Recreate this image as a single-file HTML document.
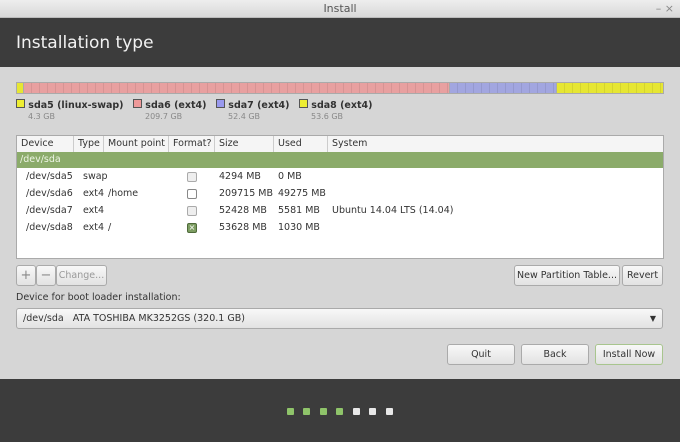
<!DOCTYPE html>
<html><head><style>
*{box-sizing:border-box;margin:0;padding:0}
body{width:680px;height:442px;overflow:hidden;background:#d6d6d6;font-family:"DejaVu Sans","Liberation Sans",sans-serif;font-size:9.5px;color:#333;position:relative}
.a{position:absolute}
.title{left:0;top:0;width:680px;height:18px;background:linear-gradient(#eee,#d8d8d8);border-bottom:1px solid #bbb;text-align:center;line-height:18px;font-size:11px;color:#555}
.hdr{left:0;top:18px;width:680px;height:49px;background:#3c3c3c;color:#f2f2f2;font-size:17px;padding:15px 0 0 16px}
.bar{top:82px;height:12px;border:1px solid #aaa;background-image:repeating-linear-gradient(90deg,transparent 0 7px,rgba(0,0,0,.08) 7px 8px)}
.sw{width:9px;height:9px;border:1px solid #555;display:inline-block}
.lg{top:99px;font-weight:bold;font-size:9.5px}
.sub{font-size:8px;color:#888;font-weight:normal;margin-left:12px}
.tbl{left:16px;top:135px;width:648px;height:124px;background:#fff;border:1px solid #aaa}
.th{position:absolute;top:0;height:16px;line-height:16px;border-right:1px solid #ccc;padding-left:4px;background:#f5f5f5}
.row{position:absolute;left:0;width:646px;height:16px;line-height:16px}
.c{position:absolute}
.cb{position:absolute;left:170px;top:3px;width:10px;height:10px;border:1px solid #aaa;border-radius:2px;background:#eee}
.btn{position:absolute;height:21px;border:1px solid #aaa;border-radius:3px;background:linear-gradient(#f8f8f8,#e2e2e2);text-align:center;line-height:19px;color:#333}
.dot{position:absolute;top:408px;width:7px;height:7px;border-radius:1px}
</style></head><body>
<div class="a title">Install<span style="position:absolute;right:6px;color:#888">– ×</span></div>
<div class="a hdr">Installation type</div>
<div class="a bar" style="left:16px;width:8px;background-color:#e6e633"></div>
<div class="a bar" style="left:23px;width:427px;background-color:#e8a0a0"></div>
<div class="a bar" style="left:449px;width:108px;background-color:#a2a6e0"></div>
<div class="a bar" style="left:556px;width:108px;background-color:#e6e633"></div>
<div class="a lg" style="left:16px"><span class="sw" style="background:#eeee33"></span> sda5 (linux-swap)<br><span class="sub">4.3 GB</span></div>
<div class="a lg" style="left:133px"><span class="sw" style="background:#ee9999"></span> sda6 (ext4)<br><span class="sub">209.7 GB</span></div>
<div class="a lg" style="left:216px"><span class="sw" style="background:#9999ee"></span> sda7 (ext4)<br><span class="sub">52.4 GB</span></div>
<div class="a lg" style="left:299px"><span class="sw" style="background:#eeee33"></span> sda8 (ext4)<br><span class="sub">53.6 GB</span></div>
<div class="a tbl">
<div class="th" style="left:0;width:57px">Device</div>
<div class="th" style="left:57px;width:30px">Type</div>
<div class="th" style="left:87px;width:65px">Mount point</div>
<div class="th" style="left:152px;width:46px">Format?</div>
<div class="th" style="left:198px;width:59px">Size</div>
<div class="th" style="left:257px;width:54px">Used</div>
<div class="th" style="left:311px;width:335px;border-right:0">System</div>
<div class="row" style="top:16px;background:#8bab6a;color:#eef5e6;padding-left:3px">/dev/sda</div>
<div class="row" style="top:33px"><span class="c" style="left:9px">/dev/sda5</span><span class="c" style="left:66px">swap</span><span class="cb"></span><span class="c" style="left:202px">4294 MB</span><span class="c" style="left:261px">0 MB</span></div>
<div class="row" style="top:50px"><span class="c" style="left:9px">/dev/sda6</span><span class="c" style="left:66px">ext4</span><span class="c" style="left:91px">/home</span><span class="cb" style="background:#fff;border-color:#888"></span><span class="c" style="left:202px">209715 MB</span><span class="c" style="left:261px">49275 MB</span></div>
<div class="row" style="top:67px"><span class="c" style="left:9px">/dev/sda7</span><span class="c" style="left:66px">ext4</span><span class="cb"></span><span class="c" style="left:202px">52428 MB</span><span class="c" style="left:261px">5581 MB</span><span class="c" style="left:315px">Ubuntu 14.04 LTS (14.04)</span></div>
<div class="row" style="top:84px"><span class="c" style="left:9px">/dev/sda8</span><span class="c" style="left:66px">ext4</span><span class="c" style="left:91px">/</span><span class="cb" style="background:#7d9d62;border-color:#4e6a3a;color:#fff;font-size:8px;line-height:8px;text-align:center">×</span><span class="c" style="left:202px">53628 MB</span><span class="c" style="left:261px">1030 MB</span></div>
</div>
<div class="btn" style="left:16px;top:265px;width:20px;color:#888;font-size:13px">+</div>
<div class="btn" style="left:36px;top:265px;width:20px;color:#888;font-size:13px">−</div>
<div class="btn" style="left:56px;top:265px;width:51px;color:#999">Change...</div>
<div class="btn" style="left:514px;top:265px;width:106px">New Partition Table...</div>
<div class="btn" style="left:622px;top:265px;width:41px">Revert</div>
<div class="a" style="left:16px;top:292px">Device for boot loader installation:</div>
<div class="btn" style="left:16px;top:308px;width:647px;text-align:left;padding-left:6px">/dev/sda&nbsp;&nbsp;&nbsp;ATA TOSHIBA MK3252GS (320.1 GB)<span style="position:absolute;right:6px;font-size:8px">▼</span></div>
<div class="btn" style="left:447px;top:344px;width:68px">Quit</div>
<div class="btn" style="left:521px;top:344px;width:68px">Back</div>
<div class="btn" style="left:595px;top:344px;width:68px;border-color:#a8c58e">Install Now</div>
<div class="a" style="left:0;top:379px;width:680px;height:63px;background:#3c3c3c"></div>
<div class="dot" style="left:287px;background:#8fc46a"></div>
<div class="dot" style="left:303px;background:#8fc46a"></div>
<div class="dot" style="left:320px;background:#8fc46a"></div>
<div class="dot" style="left:336px;background:#8fc46a"></div>
<div class="dot" style="left:353px;background:#e8e8e8"></div>
<div class="dot" style="left:369px;background:#e8e8e8"></div>
<div class="dot" style="left:386px;background:#e8e8e8"></div>
</body></html>
